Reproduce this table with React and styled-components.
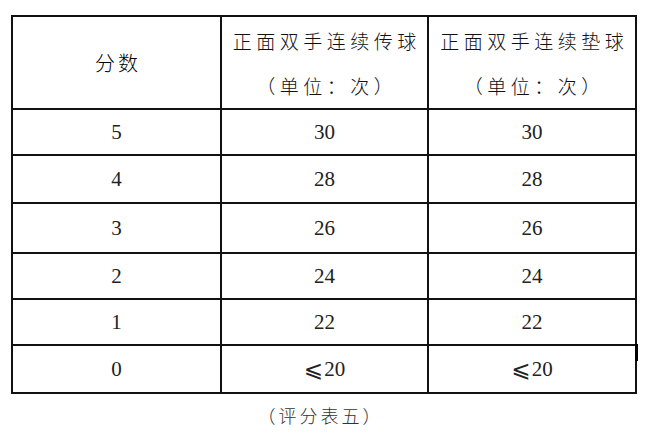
import React from "react";
import styled, { createGlobalStyle } from "styled-components";

const GlobalStyle = createGlobalStyle`
  html, body {
    margin: 0;
    padding: 0;
    background: #ffffff;
  }
  body {
    width: 645px;
    height: 435px;
    overflow: hidden;
    font-family: "Noto Sans CJK SC", "Liberation Serif", serif;
    color: #1a1a1a;
  }
`;

const Page = styled.div`
  display: flex;
  flex-direction: column;
  align-items: flex-start;
  padding: 15px 0 0 11px;
`;

const TableWrap = styled.div`
  position: relative;
`;

const Grid = styled.div`
  display: grid;
  grid-template-columns: 209px 207px 208px;
  grid-template-rows: 93px 46px 48px 50px 46px 46px 48px;
  border-top: 2px solid #111;
  border-left: 2px solid #111;
`;

const Cell = styled.div`
  box-sizing: border-box;
  display: flex;
  flex-direction: column;
  align-items: center;
  justify-content: center;
  border-right: 2px solid #111;
  border-bottom: 2px solid #111;
`;

const HeadLabel = styled.span`
  font-family: "Noto Sans CJK SC", sans-serif;
  font-weight: 300;
  font-size: ${(p) => p.$size || 19}px;
  letter-spacing: ${(p) => p.$spacing || 4.5}px;
  padding-left: ${(p) => p.$spacing || 4.5}px;
  line-height: 45px;
  color: ${(p) => p.$color || "#111"};
  white-space: nowrap;
`;

const Num = styled.span`
  display: inline-flex;
  align-items: center;
  font-family: "Liberation Serif", serif;
  font-size: 21px;
  line-height: 1;
  color: #222;
`;

const Sign = styled.span`
  font-family: "DejaVu Serif", "DejaVu Sans", serif;
  font-size: 23px;
  line-height: 1;
  margin-right: 1px;
`;

const Stub = styled.div`
  position: absolute;
  left: 624px;
  top: 329px;
  width: 3px;
  height: 17px;
  background: #000;
`;

const Caption = styled.div`
  width: 625px;
  margin-top: 7px;
  text-align: center;
  font-family: "Noto Sans CJK SC", sans-serif;
  font-weight: 300;
  font-size: 18px;
  letter-spacing: 3px;
  line-height: 28px;
  color: #333;
  padding-right: 6px;
  box-sizing: border-box;
`;

const rows = [
  ["5", "30", "30"],
  ["4", "28", "28"],
  ["3", "26", "26"],
  ["2", "24", "24"],
  ["1", "22", "22"],
  ["0", "≤20", "≤20"],
];

const skills = ["正面双手连续传球", "正面双手连续垫球"];

function Value({ v }) {
  if (v.startsWith("≤")) {
    return (
      <Num>
        <Sign>⩽</Sign>
        {v.slice(1)}
      </Num>
    );
  }
  return <Num>{v}</Num>;
}

export default function App() {
  return (
    <>
      <GlobalStyle />
      <Page>
        <TableWrap>
          <Grid>
            <Cell>
              <HeadLabel $size={20} $spacing={3} $color="#000">分数</HeadLabel>
            </Cell>
            {skills.map((s) => (
              <Cell key={s}>
                <HeadLabel>{s}</HeadLabel>
                <HeadLabel>（单位：次）</HeadLabel>
              </Cell>
            ))}
            {rows.map((r) =>
              r.map((v, i) => (
                <Cell key={r[0] + "-" + i}>
                  <Value v={v} />
                </Cell>
              ))
            )}
          </Grid>
          <Stub />
        </TableWrap>
        <Caption>（评分表五）</Caption>
      </Page>
    </>
  );
}
